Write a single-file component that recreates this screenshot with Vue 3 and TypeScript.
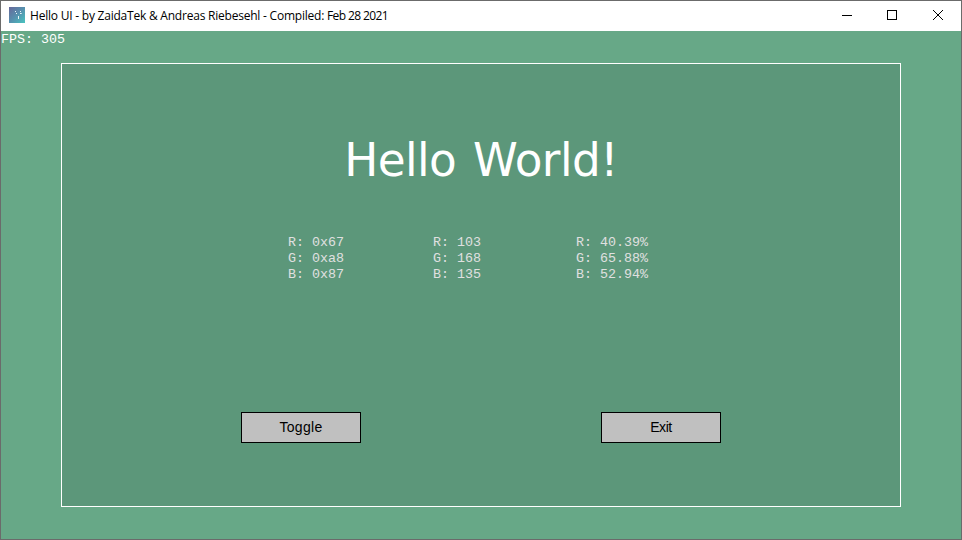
<script setup lang="ts">
interface Readout {
  id: string
  lines: string[]
}

const title = 'Hello UI - by ZaidaTek & Andreas Riebesehl - Compiled: '
const buildDate = 'Feb 28 2021'
const fps = 305
const rgb = [103, 168, 135]
const channels = ['R', 'G', 'B']

const readouts: Readout[] = [
  { id: 'hex', lines: rgb.map((v, i) => `${channels[i]}: 0x${v.toString(16)}`) },
  { id: 'dec', lines: rgb.map((v, i) => `${channels[i]}: ${v}`) },
  { id: 'pct', lines: rgb.map((v, i) => `${channels[i]}: ${((v / 255) * 100).toFixed(2)}%`) },
]
</script>

<template>
  <div class="window">
    <header class="titlebar">
      <svg class="app-icon" width="16" height="16" viewBox="0 0 16 16" shape-rendering="crispEdges">
        <defs>
          <linearGradient id="iconFill" x1="0" y1="0" x2="1" y2="1">
            <stop offset="0" stop-color="#67689a" />
            <stop offset="0.5" stop-color="#5690ae" />
            <stop offset="1" stop-color="#48c4bf" />
          </linearGradient>
        </defs>
        <rect width="16" height="16" fill="url(#iconFill)" />
        <g fill="#e6f4f8">
          <rect x="6" y="4" width="1" height="1" />
          <rect x="11" y="4" width="1" height="1" />
          <rect x="7" y="6" width="1" height="1" />
          <rect x="11" y="6" width="1" height="1" />
          <rect x="12" y="6" width="1" height="1" opacity="0.7" />
          <rect x="9" y="9" width="1" height="3" />
        </g>
      </svg>
      <span class="title">{{ title }}<span class="date">{{ buildDate }}</span></span>
      <div class="controls">
        <button class="control minimize" aria-label="Minimize">
          <svg width="10" height="10" viewBox="0 0 10 10" shape-rendering="crispEdges"><path d="M0 5.5H10" /></svg>
        </button>
        <button class="control" aria-label="Maximize">
          <svg width="10" height="10" viewBox="0 0 10 10" shape-rendering="crispEdges"><path d="M.5 .5H9.5V9.5H.5Z" /></svg>
        </button>
        <button class="control" aria-label="Close">
          <svg width="10" height="10" viewBox="0 0 10 10"><path d="M0 0L10 10M10 0L0 10" /></svg>
        </button>
      </div>
    </header>
    <main class="client">
      <div class="fps">FPS: {{ fps }}</div>
      <section class="panel">
        <h1 class="heading">Hello World!</h1>
        <div class="readouts">
          <div v-for="r in readouts" :key="r.id" class="readout">
            <div v-for="line in r.lines" :key="line">{{ line }}</div>
          </div>
        </div>
        <div class="actions">
          <button class="action toggle">Toggle</button>
          <button class="action exit">Exit</button>
        </div>
      </section>
    </main>
  </div>
</template>

<style>
body {
  margin: 0;
  overflow: hidden;
}
</style>

<style scoped>
.window {
  box-sizing: border-box;
  width: 962px;
  height: 540px;
  border: 1px solid #6b6b6b;
  display: flex;
  flex-direction: column;
  background: #fff;
}
.titlebar {
  height: 30px;
  flex: none;
  display: flex;
  align-items: center;
  padding-left: 8px;
}
.app-icon {
  flex: none;
  margin-right: 5px;
  margin-top: -2px;
}
.title {
  font: 12px/28px "Open Sans", "Noto Sans", sans-serif;
  letter-spacing: -0.22px;
  color: #000;
  white-space: pre;
}
.date {
  letter-spacing: -0.62px;
}
.controls {
  margin-left: auto;
  display: flex;
  height: 28px;
  align-self: flex-start;
}
.control {
  box-sizing: border-box;
  width: 46px;
  height: 28px;
  padding: 0;
  border: 0;
  background: none;
  display: flex;
  align-items: center;
  justify-content: center;
}
.control.minimize {
  padding-left: 2px;
}
.control svg {
  fill: none;
  stroke: #000;
  stroke-width: 1;
}
.client {
  flex: 1;
  background: #67a887;
  display: flex;
  flex-direction: column;
  color: #fff;
}
.fps {
  box-sizing: border-box;
  height: 32px;
  padding-top: 1px;
  font: 13.33px/16px "Liberation Mono", monospace;
}
.panel {
  box-sizing: border-box;
  width: 840px;
  height: 444px;
  margin-left: 60px;
  border: 1px solid #fff;
  background: #5c977a;
  display: flex;
  flex-direction: column;
}
.heading {
  margin: 69px 0 0;
  height: 56px;
  font: 400 45.3px/56px "DejaVu Sans", sans-serif;
  letter-spacing: -0.55px;
  word-spacing: 3px;
  text-align: center;
  white-space: nowrap;
}
.readouts {
  margin-top: 46px;
  padding-left: 226px;
  display: grid;
  grid-template-columns: 145px 143px 80px;
  font: 13.33px/16px "Liberation Mono", monospace;
  color: #e0e0e0;
  white-space: pre;
}
.actions {
  margin-top: 129px;
  padding: 0 179px;
  display: flex;
  justify-content: space-between;
}
.action {
  box-sizing: border-box;
  width: 120px;
  height: 31px;
  padding: 0;
  border: 1px solid #000;
  border-radius: 0;
  background: #c0c0c0;
  color: #000;
  font: 14px/29px "Liberation Sans", Arial, sans-serif;
}
.toggle {
  letter-spacing: 0.3px;
}
.exit {
  letter-spacing: -0.4px;
}
</style>
